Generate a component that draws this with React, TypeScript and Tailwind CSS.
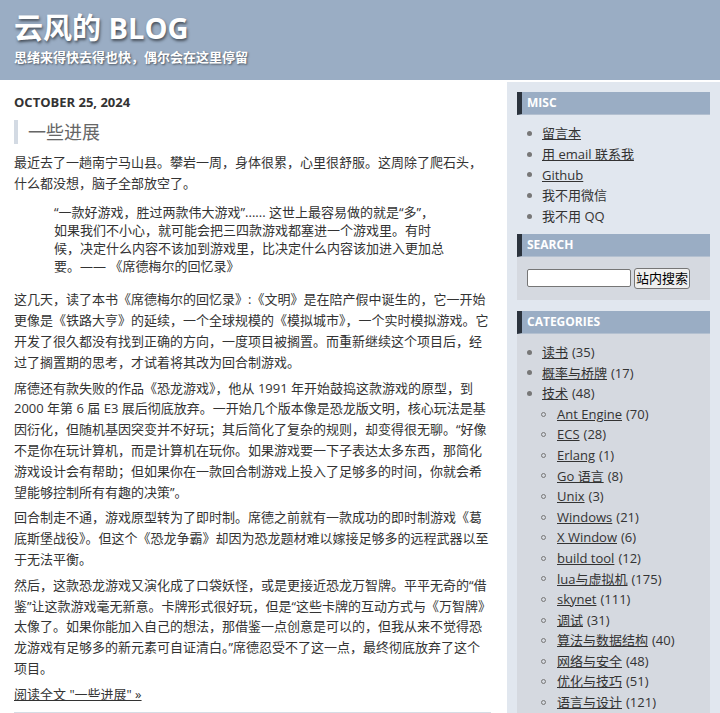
import React from "react";

const font = { fontFamily: '"Open Sans", "Noto Sans CJK SC", sans-serif' };

function Dot() {
  return <span className="block w-[5px] h-[5px] rounded-full bg-[#777]" />;
}
function Circle() {
  return <span className="block w-[5px] h-[5px] rounded-full border border-[#777]" />;
}

function WidgetHeader({ children }: { children: React.ReactNode }) {
  return (
    <h2 className="h-[23px] bg-[#9aadc4] border-l-[5px] border-[#2b333d] border-b border-b-[#b3c0d0] pl-[5px] text-[12px] leading-[22px] font-bold text-white uppercase">
      {children}
    </h2>
  );
}

const misc: { t: string; link: boolean }[] = [
  { t: "留言本", link: true },
  { t: "用 email 联系我", link: true },
  { t: "Github", link: true },
  { t: "我不用微信", link: false },
  { t: "我不用 QQ", link: false },
];

const cats: [string, number][] = [
  ["读书", 35],
  ["概率与桥牌", 17],
  ["技术", 48],
];
const sub: [string, number][] = [
  ["Ant Engine", 70],
  ["ECS", 28],
  ["Erlang", 1],
  ["Go 语言", 8],
  ["Unix", 3],
  ["Windows", 21],
  ["X Window", 6],
  ["build tool", 12],
  ["lua与虚拟机", 175],
  ["skynet", 111],
  ["调试", 31],
  ["算法与数据结构", 40],
  ["网络与安全", 48],
  ["优化与技巧", 51],
  ["语言与设计", 121],
];

export default function App() {
  return (
    <div style={font} className="w-[720px] min-h-[713px] bg-white text-[#333] text-[13px]">
      <header className="h-[80px] bg-[#9aadc4] pl-[14px] pt-[10px] text-white">
        <h1 className="text-[29px] leading-[36px] font-bold [text-shadow:1px_2px_3px_rgba(0,0,0,0.55)]">
          云风的 BLOG
        </h1>
        <div className="mt-[2px] text-[13px] leading-[18px] font-bold [text-shadow:1px_1px_2px_rgba(0,0,0,0.5)]">
          思绪来得快去得也快，偶尔会在这里停留
        </div>
      </header>
      <div className="flex mt-[2px]">
        <main className="w-[507px] pl-[14px] pr-[16px] pt-[10px]">
          <div className="text-[13px] leading-[20px] font-bold uppercase">October 25, 2024</div>
          <h2 className="mt-[8px] h-[24px] border-l-4 border-[#d3dae3] pl-[10px] text-[18px] leading-[24px] text-[#666]">
            一些进展
          </h2>
          <div className="border-b border-[#d6dce4] pb-[7px] leading-[20.8px]">
            <p className="mt-[8px]">
              最近去了一趟南宁马山县。攀岩一周，身体很累，心里很舒服。这周除了爬石头，什么都没想，脑子全部放空了。
            </p>
            <blockquote className="ml-[40px] w-[390.4px] mt-[9px] mb-[14px] leading-[18.2px]">
              “一款好游戏，胜过两款伟大游戏”...... 这世上最容易做的就是“多”，如果我们不小心，就可能会把三四款游戏都塞进一个游戏里。有时候，决定什么内容不该加到游戏里，比决定什么内容该加进入更加总要。—— 《席德梅尔的回忆录》
            </blockquote>
            <p className="mb-[5px]">
              这几天，读了本书《席德梅尔的回忆录》:《文明》是在陪产假中诞生的，它一开始更像是《铁路大亨》的延续，一个全球规模的《模拟城市》，一个实时模拟游戏。它开发了很久都没有找到正确的方向，一度项目被搁置。而重新继续这个项目后，经过了搁置期的思考，才试着将其改为回合制游戏。
            </p>
            <p className="mb-[5px]">
              席德还有款失败的作品《恐龙游戏》，他从 1991 年开始鼓捣这款游戏的原型，到 2000 年第 6 届 E3 展后彻底放弃。一开始几个版本像是恐龙版文明，核心玩法是基因衍化，但随机基因突变并不好玩；其后简化了复杂的规则，却变得很无聊。“好像不是你在玩计算机，而是计算机在玩你。如果游戏要一下子表达太多东西，那简化游戏设计会有帮助；但如果你在一款回合制游戏上投入了足够多的时间，你就会希望能够控制所有有趣的决策”。
            </p>
            <p className="mb-[5px]">
              回合制走不通，游戏原型转为了即时制。席德之前就有一款成功的即时制游戏《葛底斯堡战役》。但这个《恐龙争霸》却因为恐龙题材难以嫁接足够多的远程武器以至于无法平衡。
            </p>
            <p className="mb-[5px]">
              然后，这款恐龙游戏又演化成了口袋妖怪，或是更接近恐龙万智牌。平平无奇的“借鉴”让这款游戏毫无新意。卡牌形式很好玩，但是“这些卡牌的互动方式与《万智牌》太像了。如果你能加入自己的想法，那借鉴一点创意是可以的，但我从来不觉得恐龙游戏有足够多的新元素可自证清白。”席德忍受不了这一点，最终彻底放弃了这个项目。
            </p>
            <p>
              <a href="#" className="underline">阅读全文 "一些进展" »</a>
            </p>
          </div>
        </main>
        <aside className="w-[213px] bg-[#e1e7ef] px-[10px] pt-[10px] pb-[10px]">
          <WidgetHeader>Misc</WidgetHeader>
          <ul className="pt-[8px] pb-[7px] leading-[20.8px]">
            {misc.map((m) => (
              <li key={m.t} className="flex items-center">
                <span className="w-[25px] pl-[10px]"><Dot /></span>
                {m.link ? <a href="#" className="underline">{m.t}</a> : <span>{m.t}</span>}
              </li>
            ))}
          </ul>
          <WidgetHeader>Search</WidgetHeader>
          <div className="h-[43px] bg-[#d5d9e0] flex items-center pl-[10px] gap-[3px]">
            <input
              type="text"
              className="w-[104px] h-[18px] bg-white border border-[#767676] rounded-[2px]"
            />
            <button className="h-[21px] px-[1px] bg-[#efefef] border border-[#767676] rounded-[3px] text-[13px] leading-[18px] text-black">
              站内搜索
            </button>
          </div>
          <div className="mt-[11px]">
            <WidgetHeader>Categories</WidgetHeader>
            <ul className="bg-[#d5d9e0] pt-[8px] pb-[8px] leading-[20.6px]">
              {cats.map(([n, c]) => (
                <li key={n} className="flex items-center">
                  <span className="w-[25px] pl-[10px]"><Dot /></span>
                  <a href="#" className="underline">{n}</a>
                  <span className="ml-[4px]">({c})</span>
                </li>
              ))}
              {sub.map(([n, c]) => (
                <li key={n} className="flex items-center">
                  <span className="w-[40px] pl-[24px]"><Circle /></span>
                  <a href="#" className="underline">{n}</a>
                  <span className="ml-[4px]">({c})</span>
                </li>
              ))}
            </ul>
          </div>
        </aside>
      </div>
    </div>
  );
}
